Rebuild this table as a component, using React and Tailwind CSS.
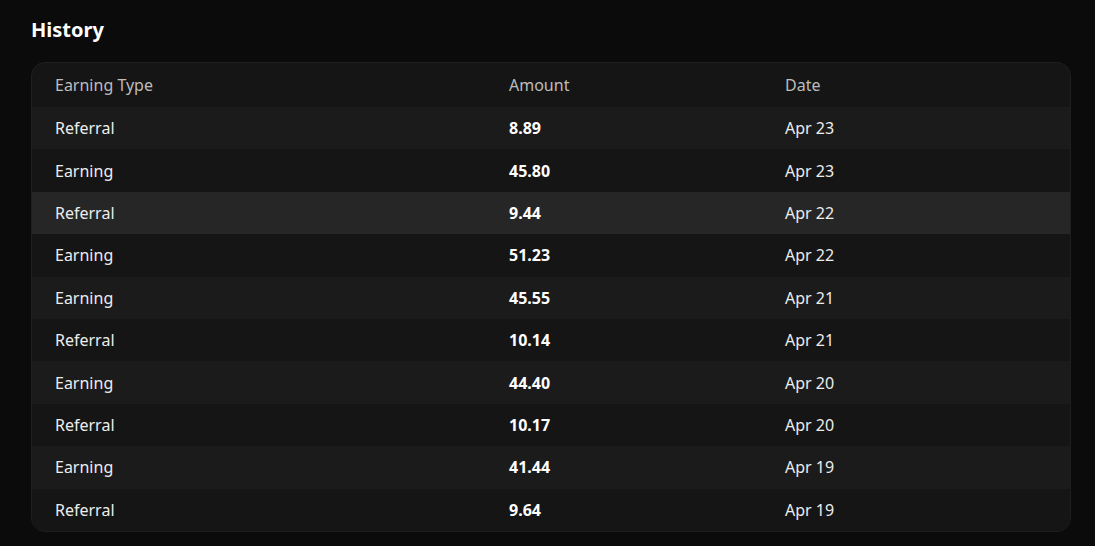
import React from "react";

const rows = [
  { type: "Referral", amount: "8.89", date: "Apr 23" },
  { type: "Earning", amount: "45.80", date: "Apr 23" },
  { type: "Referral", amount: "9.44", date: "Apr 22", active: true },
  { type: "Earning", amount: "51.23", date: "Apr 22" },
  { type: "Earning", amount: "45.55", date: "Apr 21" },
  { type: "Referral", amount: "10.14", date: "Apr 21" },
  { type: "Earning", amount: "44.40", date: "Apr 20" },
  { type: "Referral", amount: "10.17", date: "Apr 20" },
  { type: "Earning", amount: "41.44", date: "Apr 19" },
  { type: "Referral", amount: "9.64", date: "Apr 19" },
];

export default function App() {
  return (
    <div
      className="min-h-[546px] w-full bg-[#0b0b0b] pl-[31px] pr-[24px] pt-[17px] text-[#ededed]"
      style={{ fontFamily: '"Noto Sans", "Open Sans", sans-serif' }}
    >
      <h2 className="text-[20px] font-bold leading-[26px] text-white">History</h2>

      <div className="mt-[19px] overflow-hidden rounded-[14px] border border-[#1f1f1f] bg-[#151515]">
        <div className="grid h-[44px] grid-cols-[454px_276px_1fr] items-center text-[16px] text-[#bdbdbd]">
          <div className="pl-[23px]">Earning Type</div>
          <div className="pl-[23px]">Amount</div>
          <div className="pl-[23px]">Date</div>
        </div>

        {rows.map((row, i) => (
          <div
            key={i}
            className={
              "grid h-[42.4px] grid-cols-[454px_276px_1fr] items-center text-[16px] " +
              (row.active ? "bg-[#262626]" : i % 2 === 0 ? "bg-[#1b1b1b]" : "bg-[#151515]")
            }
          >
            <div className="pl-[23px]">{row.type}</div>
            <div className="pl-[23px] font-bold text-white">{row.amount}</div>
            <div className="pl-[23px]">{row.date}</div>
          </div>
        ))}
      </div>
    </div>
  );
}
